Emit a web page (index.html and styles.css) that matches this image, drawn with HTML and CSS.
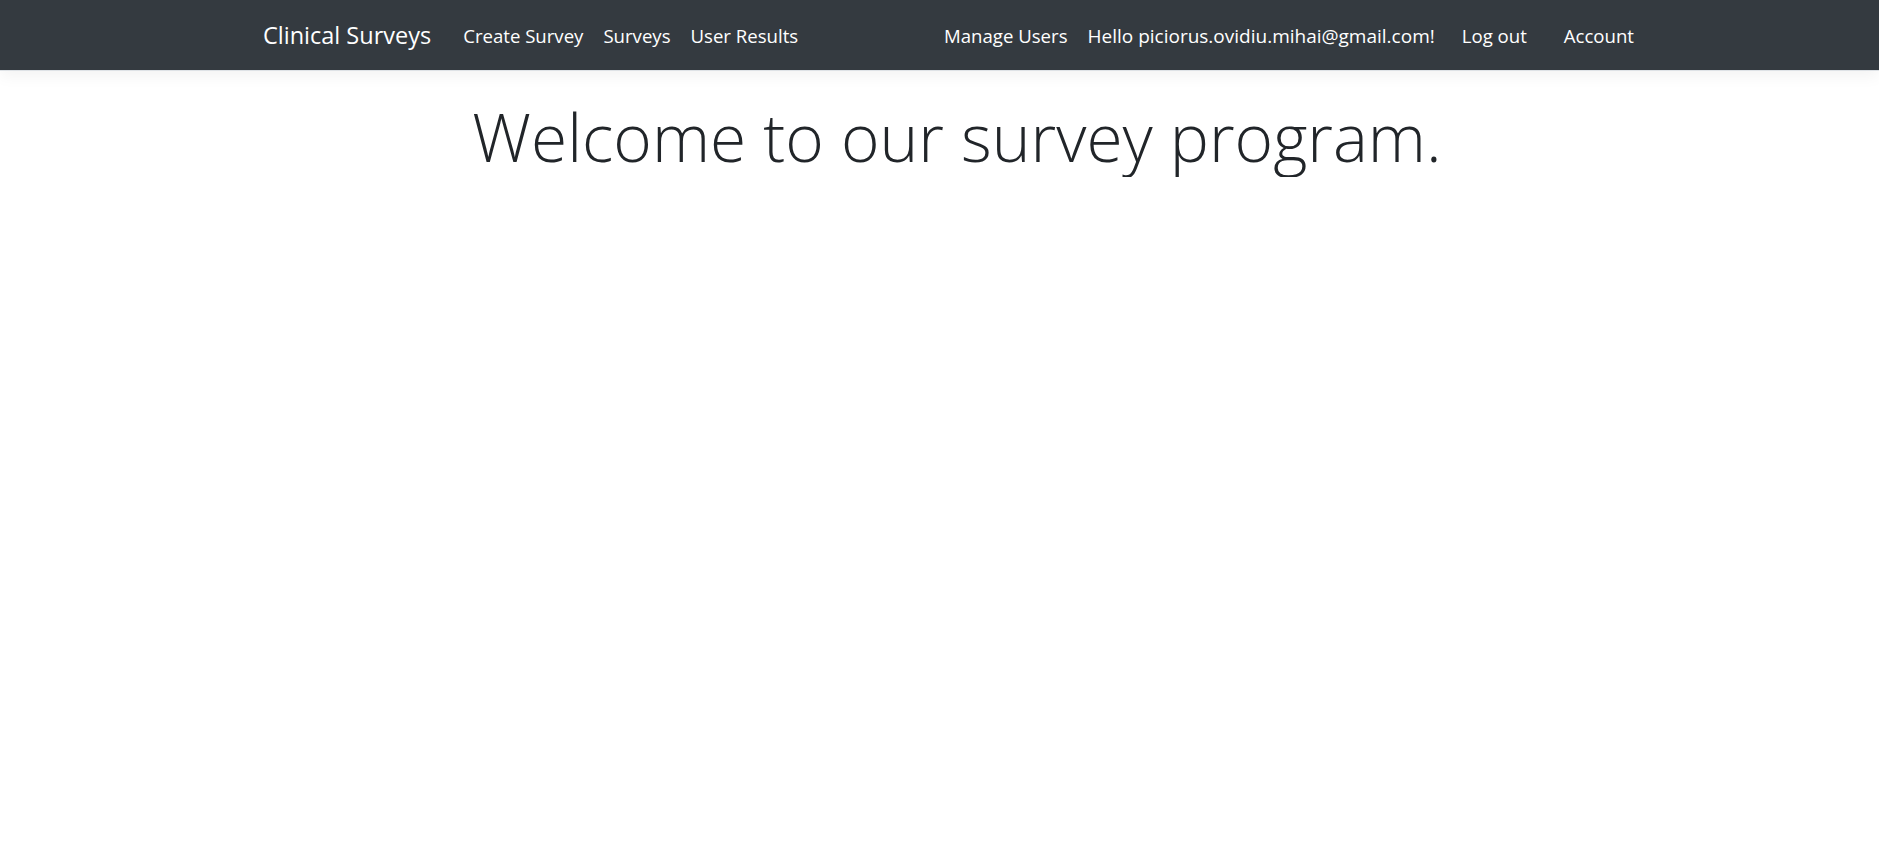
FILE: index.html
```html
<!DOCTYPE html>
<html lang="en">
<head>
<meta charset="utf-8">
<title>Clinical Surveys</title>
<link rel="stylesheet" href="styles.css">
</head>
<body>
<header class="navbar">
  <div class="nav-inner">
    <a class="brand" href="#">Clinical Surveys</a>
    <ul class="nav-left">
      <li><a class="nav-link" href="#">Create Survey</a></li>
      <li><a class="nav-link" href="#">Surveys</a></li>
      <li><a class="nav-link" href="#">User Results</a></li>
    </ul>
    <ul class="nav-right">
      <li><a class="nav-link" href="#">Manage Users</a></li>
      <li><a class="nav-link hello" href="#">Hello piciorus.ovidiu.mihai@gmail.com!</a></li>
      <li class="logout"><a class="nav-link" href="#">Log out</a></li>
      <li class="account"><a class="nav-link" href="#">Account</a></li>
    </ul>
  </div>
</header>
<main class="main">
  <h1 class="display">Welcome to our survey program.</h1>
</main>
</body>
</html>
```
FILE: styles.css
```css
html, body {
  margin: 0;
  padding: 0;
  background: #ffffff;
}
body {
  font-family: "Open Sans", "Noto Sans", sans-serif;
  color: #212529;
}
.navbar {
  background: #343a40;
  height: 70px;
  border-bottom: 1px solid #dee2e6;
  box-shadow: 0 5px 15px rgba(0, 0, 0, 0.05);
}
.nav-inner {
  height: 70px;
  box-sizing: border-box;
  display: flex;
  align-items: center;
  padding: 2px 245px 0 263px;
}
.brand {
  color: #fff;
  text-decoration: none;
  font-size: 23.5px;
  line-height: 1;
  margin-right: 22px;
}
.nav-left, .nav-right {
  list-style: none;
  margin: 0;
  padding: 0;
  display: flex;
  align-items: center;
}
.nav-left {
  flex: 1;
}
.nav-link {
  display: block;
  color: #fff;
  text-decoration: none;
  font-size: 18.6px;
  padding: 0 10px;
  line-height: 1;
}
.nav-link.hello {
  font-size: 19px;
  padding-right: 12px;
}
.nav-right .logout .nav-link {
  padding-left: 15px;
}
.nav-right .account .nav-link {
  padding-left: 27px;
  padding-right: 0;
}
.main {
  text-align: center;
  padding-left: 35px;
}
.display {
  margin: 27px 0 0;
  font-weight: 300;
  font-size: 65.8px;
  line-height: 1.2;
}
```
